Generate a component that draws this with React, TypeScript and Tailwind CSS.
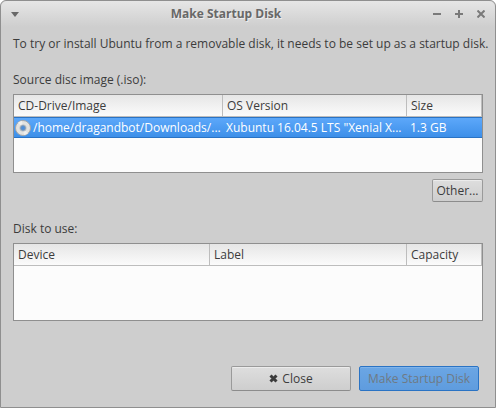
import { ReactNode } from 'react';

type Column = {
  label: string;
  width: string;
};

type Props = {
  labelId: string;
  columns: Column[];
  height: string;
  children?: ReactNode;
};

const imageColumns: Column[] = [
  { label: 'CD-Drive/Image', width: 'w-[209px]' },
  { label: 'OS Version', width: 'w-[184px]' },
  { label: 'Size', width: '' },
];

const diskColumns: Column[] = [
  { label: 'Device', width: 'w-[196px]' },
  { label: 'Label', width: 'w-[197px]' },
  { label: 'Capacity', width: '' },
];

// Sunken list with a fixed header row
const ListView = ({ labelId, columns, height, children }: Props) => (
  <div className={`border border-[#8f8f8f] bg-[#fcfcfc] ${height}`}>
    <table
      aria-labelledby={labelId}
      className="w-full table-fixed border-separate border-spacing-0 text-left"
    >
      <thead>
        <tr className="h-[22px] bg-linear-to-b from-[#e6e6e6] to-[#fcfcfc]">
          {columns.map((column) => (
            <th
              key={column.label}
              className={`border-r border-b border-[#bdbdbd] px-1 py-0 font-normal ${column.width}`}
            >
              {column.label}
            </th>
          ))}
        </tr>
      </thead>
      <tbody>{children}</tbody>
    </table>
  </div>
);

const DiscIcon = () => (
  <svg width="16" height="16" viewBox="0 0 16 16" className="shrink-0" aria-hidden="true">
    <circle cx="8" cy="8" r="7.5" fill="#e2e2e0" stroke="#a5a7a8" />
    <path d="M8 8 3 2.5A7 7 0 0 1 7 1z" fill="#f0f0ef" />
    <path d="M8 8l5 5.5A7 7 0 0 1 9 15z" fill="#eeeeed" />
    <circle cx="8" cy="8" r="3.5" fill="#b4babf" />
    <circle cx="8" cy="8" r="2.2" fill="#4b8fdc" stroke="#6f93bd" />
  </svg>
);

const TitleBar = () => (
  <header className="flex h-[26px] items-center rounded-t-md bg-linear-to-b from-[#e6e6e6] to-[#cecece] px-2.5 text-[#686868]">
    <button aria-label="Window menu">
      <svg width="8" height="5" viewBox="0 0 8 5" aria-hidden="true">
        <path d="M0 0h8L4 5z" fill="currentColor" />
      </svg>
    </button>
    <h1 className="flex-1 text-center font-bold [text-shadow:1px_1px_0_#eeeeee]">
      Make Startup Disk
    </h1>
    <div className="flex justify-end gap-3.5 text-[#7a7a7a]">
      <button aria-label="Minimize">
        <svg width="8" height="8" viewBox="0 0 8 8" aria-hidden="true">
          <path d="M0 4h8" stroke="currentColor" strokeWidth="2" />
        </svg>
      </button>
      <button aria-label="Maximize">
        <svg width="8" height="8" viewBox="0 0 8 8" aria-hidden="true">
          <path d="M0 4h8M4 0v8" stroke="currentColor" strokeWidth="2" />
        </svg>
      </button>
      <button aria-label="Close window">
        <svg width="8" height="8" viewBox="0 0 8 8" aria-hidden="true">
          <path d="M.5.5l7 7M7.5.5l-7 7" stroke="currentColor" strokeWidth="2" />
        </svg>
      </button>
    </div>
  </header>
);

const cell = 'border-y border-[#2a73c4] px-[3px] py-0 whitespace-nowrap';

const App = () => {
  return (
    <div className="flex min-h-screen flex-col rounded-t-md border border-[#8f8f8f] bg-[#cecece] font-['Open_Sans',sans-serif] text-[12px] leading-4 text-[#3c3c3c]">
      <TitleBar />

      <main className="flex flex-col px-3 pt-[9px]">
        <p className="whitespace-nowrap">
          To try or install Ubuntu from a removable disk, it needs to be set up as a startup disk.
        </p>

        <h2 id="source-label" className="mt-5 mb-1.5">
          Source disc image (.iso):
        </h2>
        <ListView labelId="source-label" columns={imageColumns} height="h-[79px]">
          <tr className="h-[21px] bg-linear-to-b from-[#5ea9fb] to-[#3b8ee8] text-white">
            <td className={cell}>
              <div className="-ml-0.5 flex items-center gap-0.5">
                <DiscIcon />
                /home/dragandbot/Downloads/...
              </div>
            </td>
            <td className={cell}>Xubuntu 16.04.5 LTS &quot;Xenial X...</td>
            <td className={cell}>1.3 GB</td>
          </tr>
        </ListView>
        <button className="mt-1.5 h-[23px] w-[51px] self-end rounded-xs border border-[#9a9a9a] border-b-[#8c8c8c] bg-linear-to-b from-[#dedede] to-[#cecece] inset-shadow-[0_1px_0_#ececec]">
          Other...
        </button>

        <h2 id="disk-label" className="mt-[19px] mb-1.5">
          Disk to use:
        </h2>
        <ListView labelId="disk-label" columns={diskColumns} height="h-[78px]" />
      </main>

      <footer className="mt-auto flex justify-end gap-2 p-4">
        <button className="flex h-[25px] w-[120px] items-center justify-center gap-1 rounded-xs border border-[#9a9a9a] border-b-[#8c8c8c] bg-linear-to-b from-[#dedede] to-[#cecece] inset-shadow-[0_1px_0_#ececec]">
          <svg width="9" height="9" viewBox="0 0 9 9" aria-hidden="true">
            <path d="M1.5 1.5l6 6M7.5 1.5l-6 6" stroke="currentColor" strokeWidth="3" />
          </svg>
          Close
        </button>
        <button
          disabled
          className="h-[25px] w-[120px] rounded-xs border border-[#2a73c4] bg-linear-to-b from-[#6ba6e4] to-[#5f9cde] text-[#6f7a84] inset-shadow-[0_1px_0_#7fb3ea]"
        >
          Make Startup Disk
        </button>
      </footer>
    </div>
  );
};

export default App;
